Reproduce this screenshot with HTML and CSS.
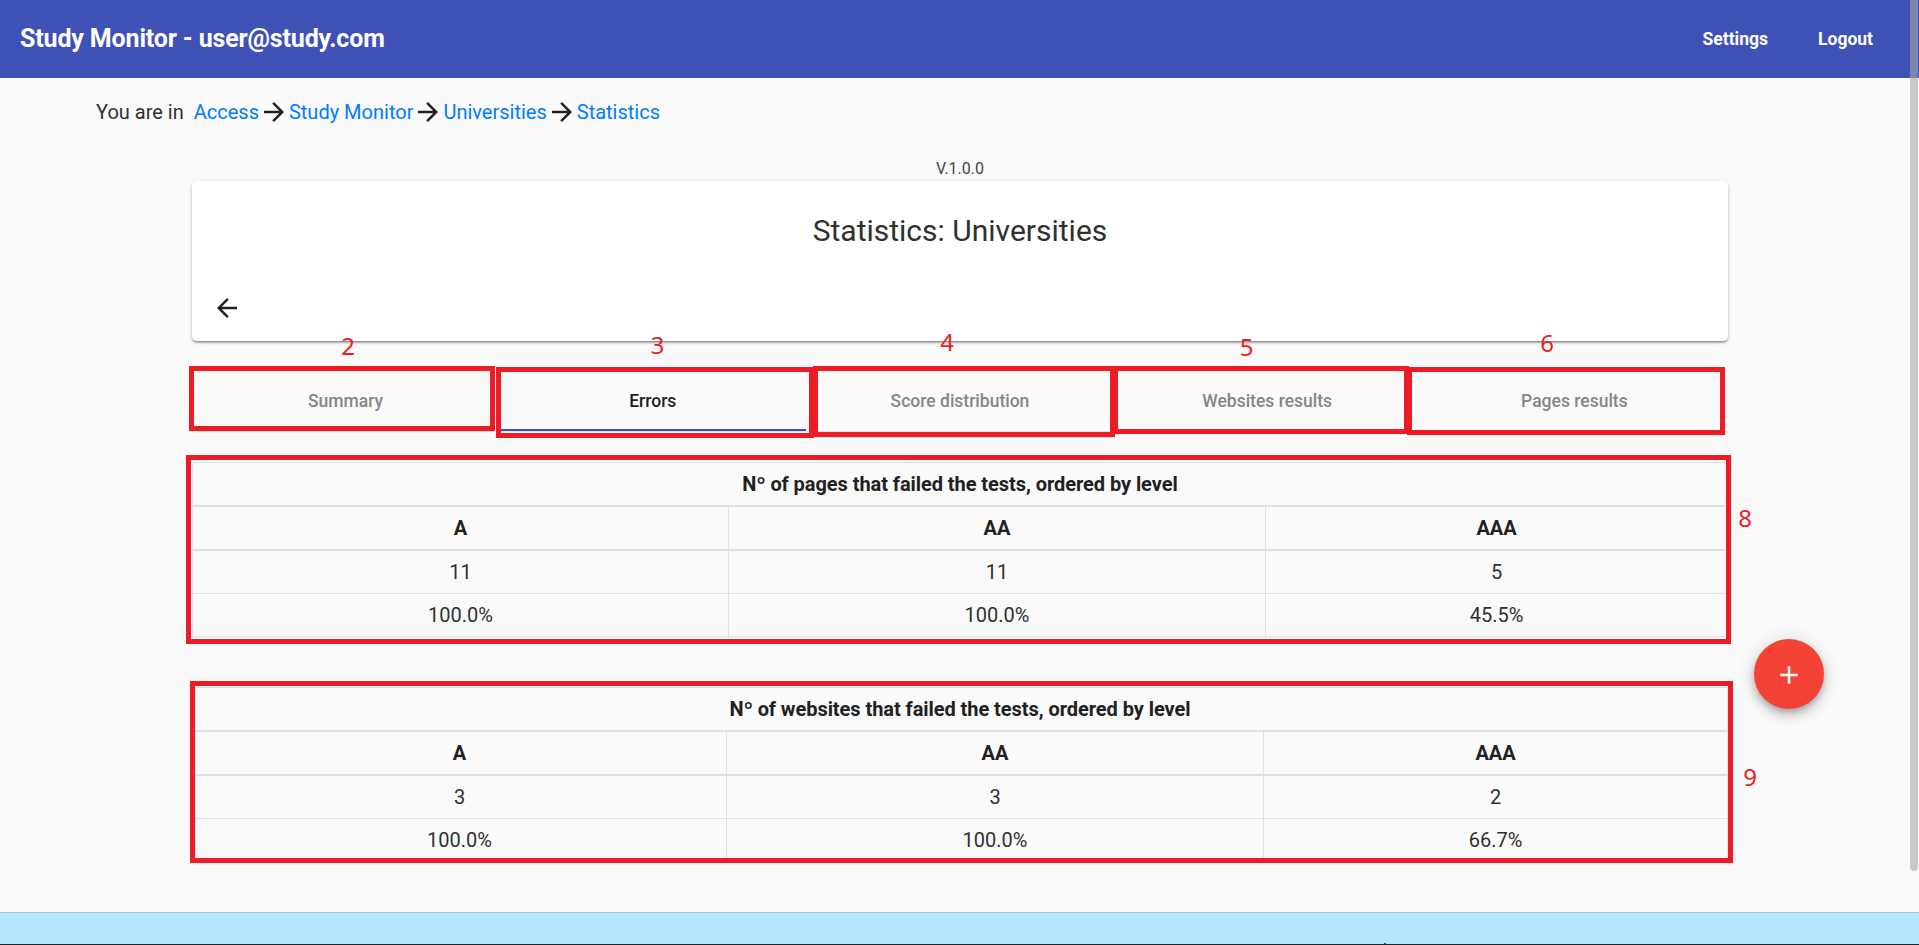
FILE: index.html
```html
<!DOCTYPE html>
<html lang="en">
<head>
<meta charset="utf-8">
<title>Study Monitor</title>
<link rel="stylesheet" href="styles.css">
</head>
<body>
<header class="toolbar">
  <h1 class="brand"><span>Study Monitor - user@study.com</span></h1>
  <nav class="menu"><a>Settings</a><a>Logout</a></nav>
</header>
<nav class="crumbs">
  <span class="here">You are in</span>
  <a class="c1">Access</a>
  <svg class="icon" viewBox="0 0 24 24"><path d="M12 4l-1.41 1.41L16.17 11H4v2h12.17l-5.58 5.59L12 20l8-8z"/></svg>
  <a class="c2">Study Monitor</a>
  <svg class="icon" viewBox="0 0 24 24"><path d="M12 4l-1.41 1.41L16.17 11H4v2h12.17l-5.58 5.59L12 20l8-8z"/></svg>
  <a class="c3">Universities</a>
  <svg class="icon" viewBox="0 0 24 24"><path d="M12 4l-1.41 1.41L16.17 11H4v2h12.17l-5.58 5.59L12 20l8-8z"/></svg>
  <a class="c4">Statistics</a>
</nav>
<main class="content">
  <div class="version">V.1.0.0</div>
  <section class="card">
    <h2 class="card-title">Statistics: Universities</h2>
    <svg class="icon back" viewBox="0 0 24 24"><path d="M20 11H7.83l5.59-5.59L12 4l-8 8 8 8 1.41-1.41L7.83 13H20v-2z"/></svg>
  </section>
  <div class="tabs">
    <div class="tab">Summary</div>
    <div class="tab active">Errors</div>
    <div class="tab">Score distribution</div>
    <div class="tab">Websites results</div>
    <div class="tab">Pages results</div>
  </div>
  <table class="grid pages">
    <colgroup><col class="a"><col class="aa"><col class="aaa"></colgroup>
    <thead>
      <tr><th colspan="3">Nº of pages that failed the tests, ordered by level</th></tr>
      <tr><th>A</th><th>AA</th><th>AAA</th></tr>
    </thead>
    <tbody>
      <tr><td>11</td><td>11</td><td>5</td></tr>
      <tr><td>100.0%</td><td>100.0%</td><td>45.5%</td></tr>
    </tbody>
  </table>
  <table class="grid sites">
    <colgroup><col class="a"><col class="aa"><col class="aaa"></colgroup>
    <thead>
      <tr><th colspan="3">Nº of websites that failed the tests, ordered by level</th></tr>
      <tr><th>A</th><th>AA</th><th>AAA</th></tr>
    </thead>
    <tbody>
      <tr><td>3</td><td>3</td><td>2</td></tr>
      <tr><td>100.0%</td><td>100.0%</td><td>66.7%</td></tr>
    </tbody>
  </table>
</main>
<footer class="footer"></footer>

<button class="fab"><svg class="icon" viewBox="0 0 24 24"><path d="M19 13h-6v6h-2v-6H5v-2h6V5h2v6h6v2z"/></svg></button>
<div class="scrollbar"></div>

<div class="mark m2"></div>
<div class="mark m3"></div>
<div class="mark m4"></div>
<div class="mark m5"></div>
<div class="mark m6"></div>
<div class="mark m8"></div>
<div class="mark m9"></div>
<span class="num n2">2</span>
<span class="num n3">3</span>
<span class="num n4">4</span>
<span class="num n5">5</span>
<span class="num n6">6</span>
<span class="num n8">8</span>
<span class="num n9">9</span>
</body>
</html>
```
FILE: styles.css
```css
* { box-sizing: border-box; }
html { height: 100%; overflow: hidden; }
body {
  margin: 0;
  height: 945px;
  position: relative;
  display: flex;
  flex-direction: column;
  overflow: hidden;
  background: #fafafa;
  color: #303030;
  font: 20px/30px Roboto, sans-serif;
}
.toolbar {
  flex: none;
  height: 78px;
  padding: 0 46px 0 20px;
  display: flex;
  align-items: center;
  justify-content: space-between;
  background: #3f51b5;
  color: #fff;
}
.brand { margin: 0; font-size: 25px; font-weight: 700; letter-spacing: -0.15px; white-space: nowrap; }
.menu { display: flex; gap: 50px; font-size: 17.5px; font-weight: 700; }
.crumbs {
  flex: none;
  height: 68px;
  padding: 0 0 0 96px;
  display: flex;
  align-items: center;
  white-space: nowrap;
}
.crumbs a { color: #007bff; }
.here { margin-right: 10px; }
.icon { width: 30px; height: 30px; fill: #212121; display: block; flex: none; }
.content { flex: none; height: 766px; width: 1536px; margin-left: 192px; }
.version { padding-top: 12px; height: 35px; font-size: 16px; line-height: 22px; text-align: center; color: #444; }
.card {
  height: 160px;
  padding: 30px 20px 0;
  background: #fff;
  border-radius: 5px;
  box-shadow: 0 4px 1px -3px rgba(0,0,0,.2), 0 2px 2px 0 rgba(0,0,0,.24), 0 1px 5px 0 rgba(0,0,0,.12);
}
.card-title { margin: 0; height: 82px; font-size: 30px; line-height: 40px; font-weight: 400; text-align: center; }
.tabs {
  display: grid;
  grid-template-columns: repeat(5, 1fr);
  height: 61px;
  margin-top: 30px;
  border-bottom: 1px solid #dfdfdf;
  font-size: 17.5px;
  font-weight: 500;
  line-height: 60px;
  text-align: center;
}
.tab { color: #868686; height: 60px; }
.tab.active { color: #212121; border-bottom: 2px solid #3f51b5; }
.grid { width: 1536px; table-layout: fixed; border-collapse: collapse; text-align: center; border: 1px solid #dee2e6; }
.grid th, .grid td { border: 1px solid #dee2e6; padding: 6px 0; line-height: 30px; font-weight: 400; }
.grid th { font-weight: 700; border-bottom-width: 2px; padding: 6px; color: #212121; letter-spacing: -0.06px; }
.pages { margin-top: 30px; }
.sites { margin-top: 50px; }
.a { width: 536px; }
.aa { width: 537px; }
.sites .a { width: 534px; }
.footer { position: relative; flex: 1; background: #b3e7ff; border-top: 1px solid #9cc8de; border-bottom: 1px solid #222; }
.footer::after { content: ""; position: absolute; left: 1384px; bottom: 0; width: 2px; height: 1px; background: #3d4f58; }
.fab {
  position: absolute;
  left: 1754px;
  top: 639px;
  width: 70px;
  height: 70px;
  padding: 2px 0 0;
  border: 0;
  border-radius: 50%;
  display: flex;
  align-items: center;
  justify-content: center;
  background: #f44336;
  box-shadow: 0 4px 6px -1px rgba(0,0,0,.2), 0 7px 12px 0 rgba(0,0,0,.14), 0 1px 22px 0 rgba(0,0,0,.12);
}
.fab .icon { fill: #fff; }
.scrollbar { position: absolute; left: 1910px; top: -4px; width: 8px; height: 875px; border-radius: 4px; background: rgba(168,168,168,.6); }
.mark { position: absolute; border: 5px solid #ed1c24; }
.m2 { left: 189px; top: 366px; width: 306px; height: 65px; }
.m3 { left: 496px; top: 367px; width: 318px; height: 71px; }
.m4 { left: 813px; top: 366px; width: 302px; height: 71px; }
.m5 { left: 1113px; top: 366px; width: 296px; height: 68px; }
.m6 { left: 1407px; top: 367px; width: 318px; height: 68px; }
.m8 { left: 186px; top: 455px; width: 1545px; height: 189px; box-shadow: inset 0 0 0 1px #fff; }
.m9 { left: 190px; top: 681px; width: 1543px; height: 182px; box-shadow: inset 0 1px #fff; }
.num { position: absolute; width: 20px; text-align: center; color: #ed1c24; font: 24px/30px "Noto Sans", sans-serif; }
.n2 { left: 338px; top: 331px; }
.n3 { left: 647.5px; top: 330px; }
.n4 { left: 937px; top: 327px; }
.n5 { left: 1236.5px; top: 332px; }
.n6 { left: 1537px; top: 328px; }
.n8 { left: 1735px; top: 503px; }
.n9 { left: 1740px; top: 762px; }
```
